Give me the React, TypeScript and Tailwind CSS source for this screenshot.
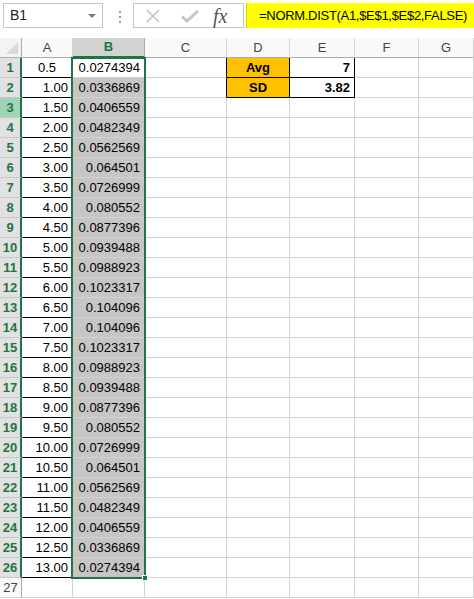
import React from 'react';

const aVals = [
  '0.5', '1.00', '1.50', '2.00', '2.50', '3.00', '3.50', '4.00', '4.50', '5.00', '5.50', '6.00', '6.50',
  '7.00', '7.50', '8.00', '8.50', '9.00', '9.50', '10.00', '10.50', '11.00', '11.50', '12.00', '12.50', '13.00',
];

const bVals = [
  '0.0274394', '0.0336869', '0.0406559', '0.0482349', '0.0562569', '0.064501', '0.0726999', '0.080552',
  '0.0877396', '0.0939488', '0.0988923', '0.1023317', '0.104096', '0.104096', '0.1023317', '0.0988923',
  '0.0939488', '0.0877396', '0.080552', '0.0726999', '0.064501', '0.0562569', '0.0482349', '0.0406559',
  '0.0336869', '0.0274394',
];

const cols = ['A', 'B', 'C', 'D', 'E', 'F', 'G'];

const font = { fontFamily: '"Liberation Sans", Arial, sans-serif' };

function FormulaBar() {
  return (
    <div className="flex items-start h-[38px] pt-[3px] pl-[3px]">
      <div className="relative flex items-center w-[100px] h-[25px] border border-[#c6c6c6] bg-white">
        <span className="pl-[6px] text-[14px] text-[#222]">B1</span>
        <span className="absolute right-[6px] top-[10px] w-0 h-0 border-l-[4px] border-r-[4px] border-t-[4px] border-l-transparent border-r-transparent border-t-[#777]" />
      </div>
      <div className="flex flex-col gap-[3px] ml-[16px] mt-[8px]">
        <span className="w-[2px] h-[2px] bg-[#9a9a9a]" />
        <span className="w-[2px] h-[2px] bg-[#9a9a9a]" />
        <span className="w-[2px] h-[2px] bg-[#9a9a9a]" />
      </div>
      <div className="flex items-center ml-[12px] w-[111px] h-[25px] border border-[#c6c6c6] bg-white">
        <svg width="16" height="16" viewBox="0 0 16 16" className="ml-[11px]">
          <path d="M2 2 L14 14 M14 2 L2 14" stroke="#c4c4c4" strokeWidth="1.6" fill="none" />
        </svg>
        <svg width="20" height="16" viewBox="0 0 20 16" className="ml-[19px]">
          <path d="M2 8.5 L7 13 L18 3" stroke="#c4c4c4" strokeWidth="3" fill="none" />
        </svg>
        <span
          className="ml-[13px] text-[20px] italic text-[#555] leading-none"
          style={{ fontFamily: '"Liberation Serif", "Times New Roman", serif' }}
        >
          fx
        </span>
      </div>
      <div className="flex items-center ml-[2px] flex-1 h-[25px] bg-[#ffff00] border-l border-[#d8d800]">
        <span className="pl-[12px] text-[13px] tracking-[-0.3px] text-black">=NORM.DIST(A1,$E$1,$E$2,FALSE)</span>
      </div>
    </div>
  );
}

function Cell({ r, c }: { r: number; c: string }) {
  const base = 'h-[20px] border-r border-b flex items-center text-[13px] text-black overflow-hidden whitespace-nowrap';
  if (r > 26) return <div className={`${base} border-[#d4d4d4]`} />;
  if (c === 'A') {
    const align = r === 1 ? 'justify-center' : 'justify-end pr-[4px]';
    return <div className={`${base} ${align} border-black`}>{aVals[r - 1]}</div>;
  }
  if (c === 'B') {
    const bg = r === 1 ? 'bg-white' : 'bg-[#c6c6c6]';
    return <div className={`${base} ${bg} justify-end pr-[4px] border-[#d4d4d4]`}>{bVals[r - 1]}</div>;
  }
  if (c === 'C' && r <= 2) return <div className={`${base} border-r-black border-b-[#d4d4d4]`} />;
  if (c === 'D' && r <= 2)
    return (
      <div className={`${base} bg-[#ffc000] justify-center font-bold border-black`}>{r === 1 ? 'Avg' : 'SD'}</div>
    );
  if (c === 'E' && r <= 2)
    return <div className={`${base} justify-end pr-[4px] font-bold border-black`}>{r === 1 ? '7' : '3.82'}</div>;
  return <div className={`${base} border-[#d4d4d4]`} />;
}

function Sheet() {
  const rows = Array.from({ length: 27 }, (_, i) => i + 1);
  return (
    <div className="relative grid grid-cols-[22px_51px_72px_82px_63px_65px_64px_1fr]">
      <div className="flex items-end justify-end pr-[3px] pb-[3px] h-[20px] bg-[#f3f3f3] border-r border-b border-[#ababab]">
        <svg width="12" height="12" viewBox="0 0 12 12">
          <path d="M12 0 L12 12 L0 12 Z" fill="#d9d9d9" />
        </svg>
      </div>
      {cols.map((c) =>
        c === 'B' ? (
          <div key={c} className="h-[20px] flex items-center justify-center bg-[#d2d2d2] border-r border-[#ababab] border-b-2 border-b-[#217346] text-[13px] font-bold text-[#217346]">
            {c}
          </div>
        ) : (
          <div key={c} className="h-[20px] flex items-center justify-center bg-[#fafafa] border-r border-b border-[#d4d4d4] border-b-[#ababab] text-[13px] text-[#444]">
            {c}
          </div>
        )
      )}
      {rows.map((r) => (
        <React.Fragment key={r}>
          {r <= 26 ? (
            <div
              className={`h-[20px] flex items-center justify-center border-b border-[#c8c8c8] border-r-2 border-r-[#217346] text-[13px] font-bold text-[#217346] ${
                r === 3 ? 'bg-[#9fd5b7]' : 'bg-[#e1e1e1]'
              }`}
            >
              {r}
            </div>
          ) : (
            <div className="h-[20px] flex items-center justify-center bg-[#fafafa] border-r border-b border-[#ababab] border-b-[#d4d4d4] text-[13px] text-[#444]">
              {r}
            </div>
          )}
          {cols.map((c) => (
            <Cell key={c} r={r} c={c} />
          ))}
        </React.Fragment>
      ))}
      <div className="absolute left-[71px] top-[19px] w-[75px] h-[522px] border-2 border-[#217346] pointer-events-none" />
      <div className="absolute left-[142px] top-[537px] w-[6px] h-[6px] bg-[#217346] border border-white" />
    </div>
  );
}

export default function App() {
  return (
    <div className="w-[474px] h-[599px] bg-white overflow-hidden" style={font}>
      <FormulaBar />
      <Sheet />
    </div>
  );
}
